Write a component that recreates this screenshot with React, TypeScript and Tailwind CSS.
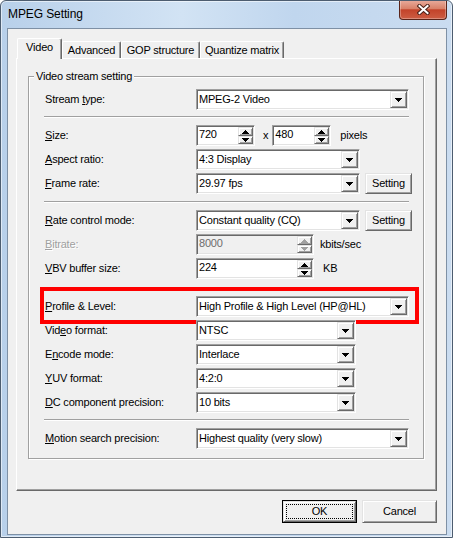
import React from 'react';

// classic 3D edges (Win classic system colours)
const sunken =
  'border border-t-[#a0a0a0] border-l-[#a0a0a0] border-r-white border-b-white shadow-[inset_1px_1px_0_#696969,inset_-1px_-1px_0_#e3e3e3]';
const raised =
  'border border-t-[#e3e3e3] border-l-[#e3e3e3] border-r-[#696969] border-b-[#696969] shadow-[inset_1px_1px_0_#fff,inset_-1px_-1px_0_#a0a0a0] bg-[#f0f0f0]';

function Arrow({ up = false, color = '#000' }: { up?: boolean; color?: string }) {
  return (
    <svg width="7" height="4" viewBox="0 0 7 4" shapeRendering="crispEdges" className={up ? 'rotate-180' : ''}>
      <path d="M0 0h7v1H0zM1 1h5v1H1zM2 2h3v1H2zM3 3h1v1H3z" fill={color} />
    </svg>
  );
}

function Combo({ value, className }: { value: string; className: string }) {
  return (
    <div className={`flex h-[21px] bg-white p-px ${sunken} ${className}`}>
      <span className="flex-1 truncate pl-[1px] leading-[17px]">{value}</span>
      <div className={`flex w-[17px] items-center justify-center ${raised}`}>
        <Arrow />
      </div>
    </div>
  );
}

function Spin({ value, className, disabled = false }: { value: string; className: string; disabled?: boolean }) {
  const arrow = disabled ? '#a0a0a0' : '#000';
  return (
    <div className={`flex h-[21px] p-px ${sunken} ${disabled ? 'bg-[#f0f0f0] text-[#6d6d6d]' : 'bg-white'} ${className}`}>
      <span className="flex-1 pl-[1px] leading-[14px]">{value}</span>
      <div className="flex w-[15px] flex-col">
        <div className={`flex h-[9px] items-center justify-center ${raised}`}>
          <Arrow up color={arrow} />
        </div>
        <div className={`flex h-[8px] items-center justify-center ${raised}`}>
          <Arrow color={arrow} />
        </div>
      </div>
    </div>
  );
}

function Row({ label, children, className = '' }: { label: React.ReactNode; children: React.ReactNode; className?: string }) {
  return (
    <div className={`relative flex h-[21px] items-center ${className}`}>
      <div className="w-[151px] leading-[13px]">{label}</div>
      {children}
    </div>
  );
}

function Sep({ className }: { className: string }) {
  return <div className={`-ml-px h-[2px] w-[365px] border-t border-b border-t-[#a0a0a0] border-b-white ${className}`} />;
}

function SettingBtn() {
  return (
    <div className={`ml-[5px] flex h-[21px] w-[47px] items-center justify-center leading-[13px] ${raised}`}>Setting</div>
  );
}

export default function App() {
  return (
    <div className="flex h-[538px] w-[453px] flex-col overflow-hidden rounded-t-[6px] border border-[#4d5d70] bg-[linear-gradient(90deg,#b8d0ea_0%,#d2e3f4_40%,#c0d6ee_65%,#cadcf0_100%)] pb-[2px] pl-[6px] pr-[5px] font-['Liberation_Sans',Arial,sans-serif] text-[11px] tracking-[-0.2px] text-black shadow-[inset_0_0_0_1px_rgba(255,255,255,0.55)]">
      {/* title bar */}
      <div className="flex h-[27px] shrink-0 items-start justify-between">
        <div className="pl-[1px] pt-[6px] text-[12px] leading-[15px] tracking-[-0.1px]">MPEG Setting</div>
        <div className="mt-[-1px] flex h-[20px] w-[48px] items-center justify-center rounded-b-[4px] border border-t-0 border-[#5a2419] bg-[linear-gradient(180deg,#e9ad9e_0%,#d98169_45%,#c3432a_52%,#cd5d43_100%)] shadow-[inset_0_0_0_1px_rgba(255,255,255,0.3)]">
          <svg width="13" height="11" viewBox="0 0 13 11">
            <path d="M2.5 2L10.5 9M10.5 2L2.5 9" stroke="#4a2118" strokeWidth="4" strokeLinecap="square" />
            <path d="M2.5 2L10.5 9M10.5 2L2.5 9" stroke="#fff" strokeWidth="2" strokeLinecap="square" />
          </svg>
        </div>
      </div>

      {/* client area */}
      <div className="flex h-[507px] shrink-0 flex-col border border-[#7e90a5] bg-[#f0f0f0]">
        {/* tabs */}
        <div className="mt-[9px] flex h-[20px] items-end pl-[9px]">
          <div className="relative z-10 -mb-px flex h-[21px] w-[45px] items-start justify-center rounded-t-[2px] border-l border-r border-t border-l-white border-r-[#696969] border-t-white bg-[#f0f0f0] pt-[2px] leading-[13px] shadow-[inset_-1px_0_0_#a0a0a0]">
            Video
          </div>
          <div className="flex h-[17px] w-[59px] items-center justify-center rounded-t-[2px] border-l border-r border-t border-l-white border-r-[#696969] border-t-white leading-[13px] shadow-[inset_-1px_0_0_#a0a0a0]">
            Advanced
          </div>
          <div className="flex h-[17px] w-[79px] items-center justify-center rounded-t-[2px] border-l border-r border-t border-l-white border-r-[#696969] border-t-white leading-[13px] shadow-[inset_-1px_0_0_#a0a0a0]">
            GOP structure
          </div>
          <div className="flex h-[17px] w-[84px] items-center justify-center rounded-t-[2px] border-l border-r border-t border-l-white border-r-[#696969] border-t-white leading-[13px] shadow-[inset_-1px_0_0_#a0a0a0]">
            Quantize matrix
          </div>
        </div>

        {/* tab panel */}
        <div className="ml-[8px] h-[433px] w-[421px] border border-b-[#696969] border-l-white border-r-[#696969] border-t-white pl-[11px] pt-[17px] shadow-[inset_-1px_-1px_0_#a0a0a0]">
          {/* group box */}
          <div className="relative h-[383px] w-[396px] border border-[#a0a0a0] pl-[16px] pt-[12px] shadow-[inset_1px_1px_0_#fff,1px_1px_0_#fff]">
            <div className="absolute left-[5px] top-[-7px] bg-[#f0f0f0] px-[2px] leading-[13px]">Video stream setting</div>

            <Row label={<>Stream <u>t</u>ype:</>}>
              <Combo value="MPEG-2 Video" className="w-[213px]" />
            </Row>

            <Sep className="mt-[6px]" />

            <Row className="mt-[7px]" label={<><u>S</u>ize:</>}>
              <Spin value="720" className="w-[59px]" />
              <span className="ml-[8px] leading-[13px]">x</span>
              <Spin value="480" className="ml-[4px] w-[59px]" />
              <span className="ml-[9px] leading-[13px]">pixels</span>
            </Row>
            <Row className="mt-[3px]" label={<><u>A</u>spect ratio:</>}>
              <Combo value="4:3 Display" className="w-[164px]" />
            </Row>
            <Row className="mt-[3px]" label={<><u>F</u>rame rate:</>}>
              <Combo value="29.97 fps" className="w-[164px]" />
              <SettingBtn />
            </Row>

            <Sep className="mt-[7px]" />

            <Row className="mt-[7px]" label={<><u>R</u>ate control mode:</>}>
              <Combo value="Constant quality (CQ)" className="w-[164px]" />
              <SettingBtn />
            </Row>
            <Row
              className="mt-[3px]"
              label={
                <span className="text-[#a0a0a0] [text-shadow:1px_1px_0_#fff]">
                  <u>B</u>itrate:
                </span>
              }
            >
              <Spin value="8000" className="w-[118px]" disabled />
              <span className="ml-[6px] leading-[13px]">kbits/sec</span>
            </Row>
            <Row className="mt-[3px]" label={<><u>V</u>BV buffer size:</>}>
              <Spin value="224" className="w-[118px]" />
              <span className="ml-[9px] leading-[13px]">KB</span>
            </Row>

            <Row className="mt-[17px]" label={<><u>P</u>rofile &amp; Level:</>}>
              <Combo value="High Profile & High Level (HP@HL)" className="w-[213px]" />
              {/* red annotation frame */}
              <div className="pointer-events-none absolute left-[-5px] top-[-9px] h-[37px] w-[379px] border-4 border-[#ff0000]" />
            </Row>
            <Row className="mt-[3px]" label={<>Vid<u>e</u>o format:</>}>
              <Combo value="NTSC" className="w-[160px]" />
            </Row>
            <Row className="mt-[3px]" label={<>E<u>n</u>code mode:</>}>
              <Combo value="Interlace" className="w-[160px]" />
            </Row>
            <Row className="mt-[3px]" label={<><u>Y</u>UV format:</>}>
              <Combo value="4:2:0" className="w-[160px]" />
            </Row>
            <Row className="mt-[3px]" label={<><u>D</u>C component precision:</>}>
              <Combo value="10 bits" className="w-[160px]" />
            </Row>

            <Sep className="mt-[6px]" />

            <Row className="mt-[7px]" label={<><u>M</u>otion search precision:</>}>
              <Combo value="Highest quality (very slow)" className="w-[213px]" />
            </Row>
          </div>
        </div>

        {/* dialog buttons */}
        <div className="mt-[9px] flex justify-end gap-[5px] pr-[9px]">
          <div className="h-[23px] w-[75px] border border-black">
            <div className={`h-full p-[2px] ${raised}`}>
              <div className="flex h-full items-center justify-center border border-dotted border-black leading-[13px]">OK</div>
            </div>
          </div>
          <div className={`flex h-[23px] w-[75px] items-center justify-center leading-[13px] ${raised}`}>Cancel</div>
        </div>
      </div>
    </div>
  );
}
